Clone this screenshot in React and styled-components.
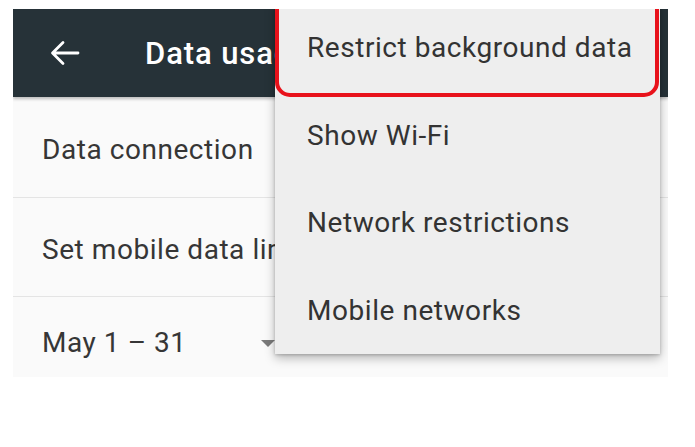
import React from "react";
import styled, { createGlobalStyle } from "styled-components";

const GlobalStyle = createGlobalStyle`
  body {
    margin: 0;
    background: #ffffff;
    font-family: Roboto, "Noto Sans", "Liberation Sans", sans-serif;
  }
`;

const Page = styled.div`
  width: 695px;
  height: 447px;
  padding: 9px 0 0 13px;
  box-sizing: border-box;
`;

const Screen = styled.div`
  position: relative;
  width: 655px;
  height: 368px;
  overflow: hidden;
  background: #fafafa;
`;

const AppBar = styled.header`
  display: flex;
  align-items: center;
  height: 88px;
  padding-left: 37px;
  gap: 65px;
  background: #263238;
  box-shadow: 0 2px 3px rgba(0, 0, 0, 0.25);
  position: relative;
  z-index: 1;
`;

const Title = styled.h1`
  margin: 0;
  color: #ffffff;
  font-size: 31px;
  font-weight: 500;
  letter-spacing: 0.9px;
`;

const Row = styled.div`
  display: flex;
  align-items: center;
  height: ${(p) => p.$h}px;
  padding: ${(p) => p.$pad || 0}px 0 0 29px;
  box-sizing: border-box;
  border-bottom: ${(p) => (p.$last ? "none" : "1px solid #e4e4e4")};
  color: #363636;
  font-size: 28px;
  letter-spacing: 0.55px;
`;

const Spinner = styled.div`
  display: flex;
  align-items: center;
  justify-content: space-between;
  width: 233px;
`;

const Caret = styled.span`
  width: 0;
  height: 0;
  border-left: 7px solid transparent;
  border-right: 7px solid transparent;
  border-top: 7px solid #7a7a7a;
  margin-top: 2px;
`;

const Menu = styled.ul`
  position: absolute;
  top: -7px;
  left: 262px;
  width: 385px;
  margin: 0;
  padding: 0;
  list-style: none;
  background: #eeeeee;
  box-shadow: 0 4px 10px rgba(0, 0, 0, 0.28), 0 1px 3px rgba(0, 0, 0, 0.2);
  z-index: 2;
`;

const MenuItem = styled.li`
  position: relative;
  display: flex;
  align-items: center;
  height: 87.5px;
  padding-left: 32px;
  color: #333333;
  font-size: 28px;
  letter-spacing: 0.55px;

  ${(p) =>
    p.$highlight &&
    `
    padding-top: 2px;
    &::after {
      content: "";
      position: absolute;
      top: -20px;
      bottom: -5px;
      left: 0;
      right: 1px;
      border: 4px solid #e8121b;
      border-radius: 15px;
    }
  `}
`;

const BackArrow = () => (
  <svg width="30" height="26" viewBox="0 0 30 26" fill="none">
    <path
      d="M28 13H3M13 2.5L2.5 13L13 23.5"
      stroke="#ffffff"
      strokeWidth="2.8"
      strokeLinecap="round"
      strokeLinejoin="round"
    />
  </svg>
);

const menuItems = [
  "Restrict background data",
  "Show Wi-Fi",
  "Network restrictions",
  "Mobile networks",
];

export default function App() {
  return (
    <>
      <GlobalStyle />
      <Page>
        <Screen>
          <AppBar>
            <BackArrow />
            <Title>Data usage</Title>
          </AppBar>
          <Row $h={101} $pad={5}>Data connection</Row>
          <Row $h={99} $pad={4}>Set mobile data limit</Row>
          <Row $h={90} $last>
            <Spinner>
              <span>May 1 – 31</span>
              <Caret />
            </Spinner>
          </Row>
          <Menu>
            {menuItems.map((label, i) => (
              <MenuItem key={label} $highlight={i === 0}>
                {label}
              </MenuItem>
            ))}
          </Menu>
        </Screen>
      </Page>
    </>
  );
}
